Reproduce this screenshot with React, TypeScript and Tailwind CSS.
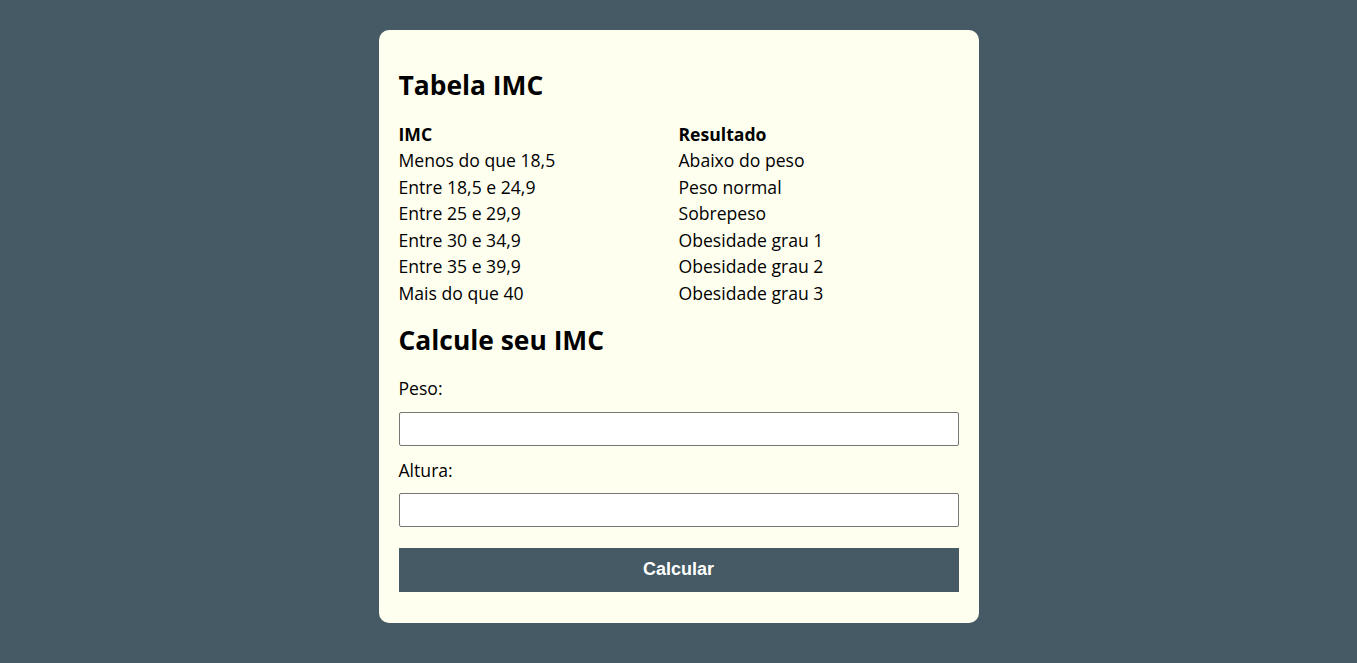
const rows: [string, string][] = [
  ['Menos do que 18,5', 'Abaixo do peso'],
  ['Entre 18,5 e 24,9', 'Peso normal'],
  ['Entre 25 e 29,9', 'Sobrepeso'],
  ['Entre 30 e 34,9', 'Obesidade grau 1'],
  ['Entre 35 e 39,9', 'Obesidade grau 2'],
  ['Mais do que 40', 'Obesidade grau 3'],
]

function App() {
  return (
    <div className="min-h-screen bg-[#455a64] pt-[30px] font-['Open_Sans',sans-serif] text-[17.6px] text-black">
      <div className="mx-auto w-[600px] rounded-[10px] bg-[#fffff0] px-5 pt-5 pb-[31px]">
        <h2 className="mt-[17px] text-[26.4px] font-bold leading-[37px]">Tabela IMC</h2>
        <div className="mt-[16.5px] grid grid-cols-2">
          <div className="font-bold leading-[26.5px]">IMC</div>
          <div className="font-bold leading-[26.5px]">Resultado</div>
          {rows.map(([imc, res]) => (
            <>
              <div key={imc} className="leading-[26.5px]">{imc}</div>
              <div key={res} className="leading-[26.5px]">{res}</div>
            </>
          ))}
        </div>
        <h2 className="mt-[15.5px] text-[26.4px] font-bold leading-[37px]">Calcule seu IMC</h2>
        <form className="flex flex-col" onSubmit={(e) => e.preventDefault()}>
          <label className="mt-[17px] leading-[24.5px]">Peso:</label>
          <input className="mt-[12px] h-[34px] w-full rounded-[2px] border border-[#767676] bg-white px-2" />
          <label className="mt-[11.5px] leading-[24.5px]">Altura:</label>
          <input className="mt-[10.5px] h-[34px] w-full rounded-[2px] border border-[#767676] bg-white px-2" />
          <button className="mt-[21px] h-[44px] w-full bg-[#455a64] font-['Liberation_Sans',Arial,sans-serif] text-[18px] font-bold text-white">
            Calcular
          </button>
        </form>
      </div>
    </div>
  )
}

export default App
